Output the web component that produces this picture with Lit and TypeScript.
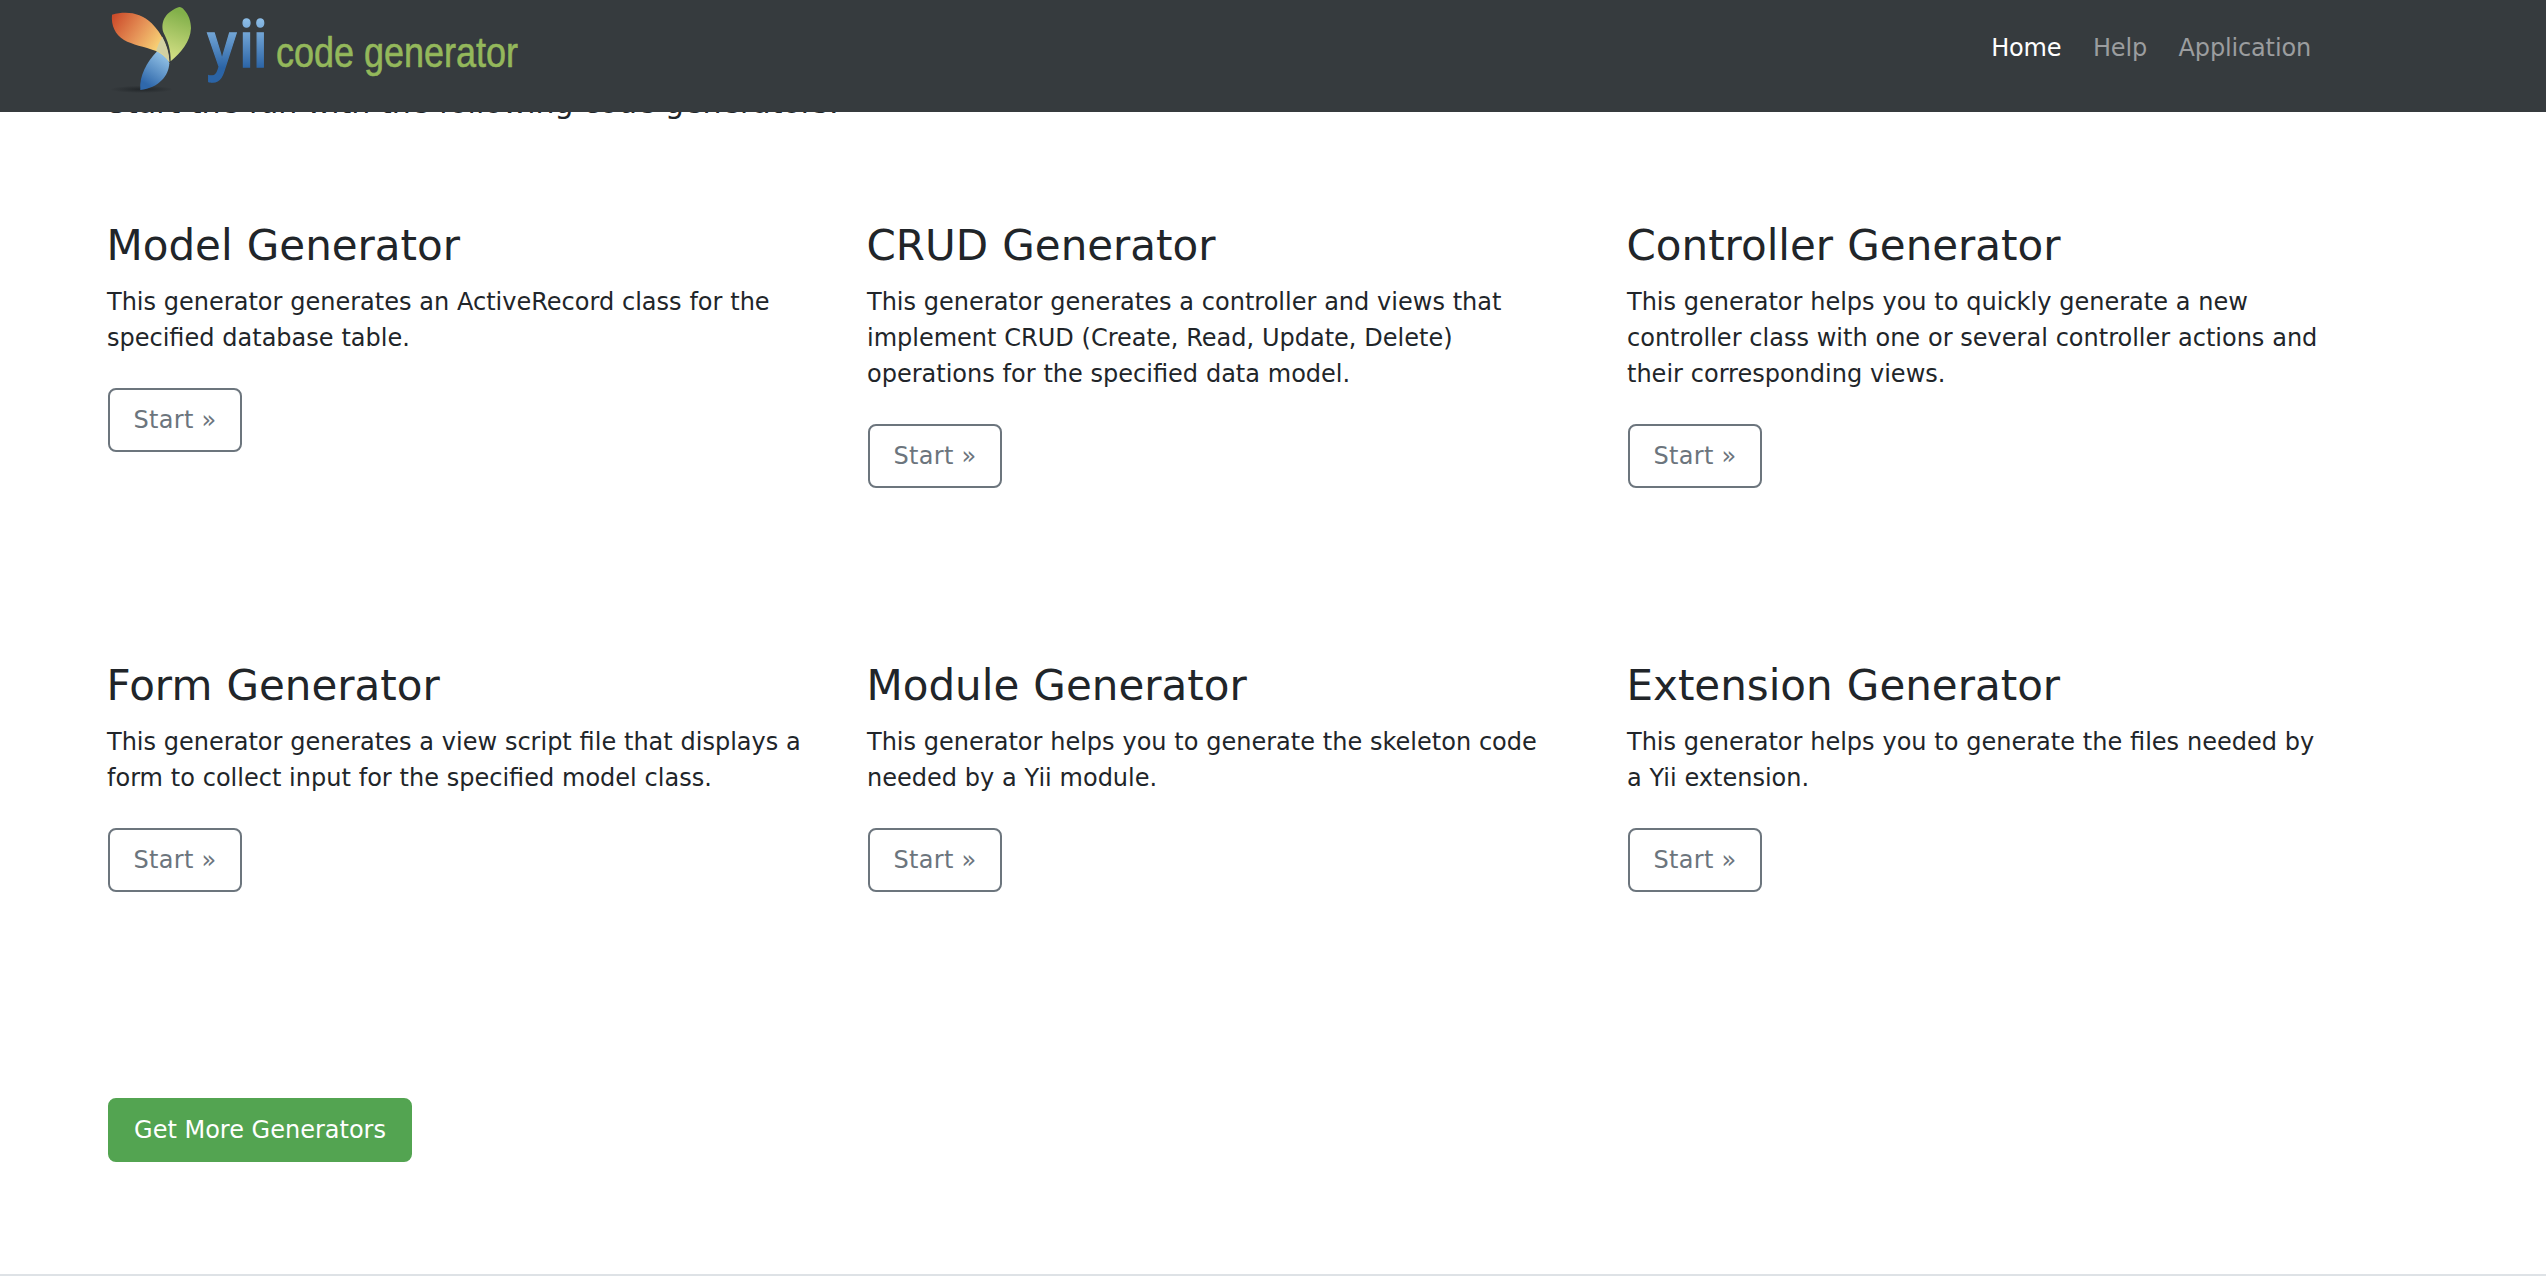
import { LitElement, html, css } from "lit";

interface Generator {
  title: string;
  lines: string[];
}

const generators: Generator[] = [
  {
    title: "Model Generator",
    lines: ["This generator generates an ActiveRecord class for the", "specified database table."],
  },
  {
    title: "CRUD Generator",
    lines: [
      "This generator generates a controller and views that",
      "implement CRUD (Create, Read, Update, Delete)",
      "operations for the specified data model.",
    ],
  },
  {
    title: "Controller Generator",
    lines: [
      "This generator helps you to quickly generate a new",
      "controller class with one or several controller actions and",
      "their corresponding views.",
    ],
  },
  {
    title: "Form Generator",
    lines: [
      "This generator generates a view script file that displays a",
      "form to collect input for the specified model class.",
    ],
  },
  {
    title: "Module Generator",
    lines: ["This generator helps you to generate the skeleton code", "needed by a Yii module."],
  },
  {
    title: "Extension Generator",
    lines: ["This generator helps you to generate the files needed by", "a Yii extension."],
  },
];

class GiiLogo extends LitElement {
  static styles = css`
    :host { display: block; }
    svg { display: block; overflow: visible; }
    .mark { font: 600 64px "Open Sans", sans-serif; stroke-width: 1.4px; }
    .label { font: 43px "Liberation Sans", Arial, sans-serif; stroke-width: 0.6px; }
  `;
  render() {
    return html`
      <svg width="430" height="112" viewBox="0 0 430 112">
        <defs>
          <linearGradient id="orange" gradientUnits="userSpaceOnUse" x1="40" y1="50" x2="190" y2="150">
            <stop offset="0" stop-color="#cc4c2b" />
            <stop offset=".5" stop-color="#e69458" />
            <stop offset="1" stop-color="#fbe07c" />
          </linearGradient>
          <linearGradient id="green" gradientUnits="userSpaceOnUse" x1="250" y1="40" x2="205" y2="165">
            <stop offset="0" stop-color="#82b04a" />
            <stop offset="1" stop-color="#d0dd82" />
          </linearGradient>
          <linearGradient id="blue" gradientUnits="userSpaceOnUse" x1="190" y1="170" x2="135" y2="250">
            <stop offset="0" stop-color="#8cbce2" />
            <stop offset="1" stop-color="#2f68ab" />
          </linearGradient>
          <linearGradient id="word" gradientUnits="userSpaceOnUse" x1="0" y1="20" x2="0" y2="68">
            <stop offset="0" stop-color="#8bbce6" />
            <stop offset="1" stop-color="#2b64a6" />
          </linearGradient>
          <radialGradient id="shade">
            <stop offset="0" stop-color="#202427" stop-opacity=".9" />
            <stop offset="1" stop-color="#202427" stop-opacity="0" />
          </radialGradient>
        </defs>
        <g transform="scale(.33333)">
          <ellipse cx="125" cy="268" rx="95" ry="11" fill="url(#shade)" />
          <path fill="url(#blue)" d="M172 153C190 157 204 172 208 190C206 228 176 264 121 270C117 228 140 186 172 153Z" />
          <path fill="url(#orange)" d="M36 44C80 32 122 38 155 70C187 102 206 145 208 186C197 170 182 158 168 153C132 140 97 134 72 120C45 103 33 76 36 44Z" />
          <path fill="#d2d0a2" d="M187 110C200 135 208 160 208 187C197 168 182 157 168 153Q174 132 187 110Z" />
          <path fill="url(#green)" d="M238 21C243 22 248 24 252 29C266 44 273 64 273 85C271 125 242 160 212 184C213 150 203 122 190 97C180 62 200 34 238 21Z" />
        </g>
        <text class="mark" fill="url(#word)" stroke="url(#word)" transform="translate(107.5 0) scale(.84 1)" x="0 37.5 54" y="67">yii</text>
        <text class="label" fill="#94b85b" stroke="#94b85b" x="176" y="67" textLength="242" lengthAdjust="spacingAndGlyphs">code generator</text>
      </svg>
    `;
  }
}
customElements.define("gii-logo", GiiLogo);

class AppRoot extends LitElement {
  static styles = css`
    :host {
      display: flex;
      flex-direction: column;
      height: 1280px;
      overflow: hidden;
      background: #fff;
      color: #212529;
      font: 24px/36px "DejaVu Sans", Verdana, sans-serif;
      white-space: nowrap;
    }
    .bar {
      flex: none;
      position: relative;
      z-index: 1;
      box-sizing: border-box;
      height: 112px;
      padding: 0 235px 0 100px;
      display: flex;
      justify-content: space-between;
      align-items: flex-start;
      background: #363b3e;
    }
    .nav {
      display: flex;
      gap: 31.5px;
      padding-top: 30px;
      letter-spacing: -0.15px;
    }
    .link { color: #9b9d9f; }
    .link.active { color: #fff; }
    .lead {
      margin: -32px 0 95px 107px;
      font-size: 30px;
      line-height: 45px;
    }
    .grid {
      display: grid;
      grid-template-columns: repeat(3, 760px);
      grid-template-rows: repeat(2, 440px);
      padding-left: 107px;
    }
    .title {
      margin: 0 0 13px -0.5px;
      font-size: 42px;
      font-weight: 400;
      line-height: 51px;
      word-spacing: 0.8px;
    }
    .text {
      margin: 0 0 32px;
      word-spacing: 0.2px;
    }
    .line { display: block; }
    .btn {
      display: inline-block;
      box-sizing: border-box;
      height: 64px;
      margin-left: 1px;
      padding: 12px 0;
      border: 2px solid #6c757d;
      border-radius: 8px;
      text-align: center;
      color: #6c757d;
    }
    .start {
      width: 134px;
      letter-spacing: 0.3px;
    }
    .more {
      align-self: flex-start;
      width: 304px;
      margin: -2px 0 0 108px;
      border-color: #53a451;
      background: #53a451;
      color: #fff;
    }
    .rule {
      margin-top: 112px;
      border-top: 2px solid #dee2e6;
    }
  `;
  render() {
    return html`
      <header class="bar">
        <gii-logo></gii-logo>
        <nav class="nav">
          <a class="link active">Home</a><a class="link">Help</a><a class="link">Application</a>
        </nav>
      </header>
      <p class="lead">Start the fun with the following code generators:</p>
      <section class="grid">
        ${generators.map(
          (g) => html`<article>
            <h3 class="title">${g.title}</h3>
            <p class="text">${g.lines.map((l) => html`<span class="line">${l}</span>`)}</p>
            <a class="btn start">Start »</a>
          </article>`
        )}
      </section>
      <a class="btn more">Get More Generators</a>
      <footer class="rule"></footer>
    `;
  }
}
customElements.define("app-root", AppRoot);
